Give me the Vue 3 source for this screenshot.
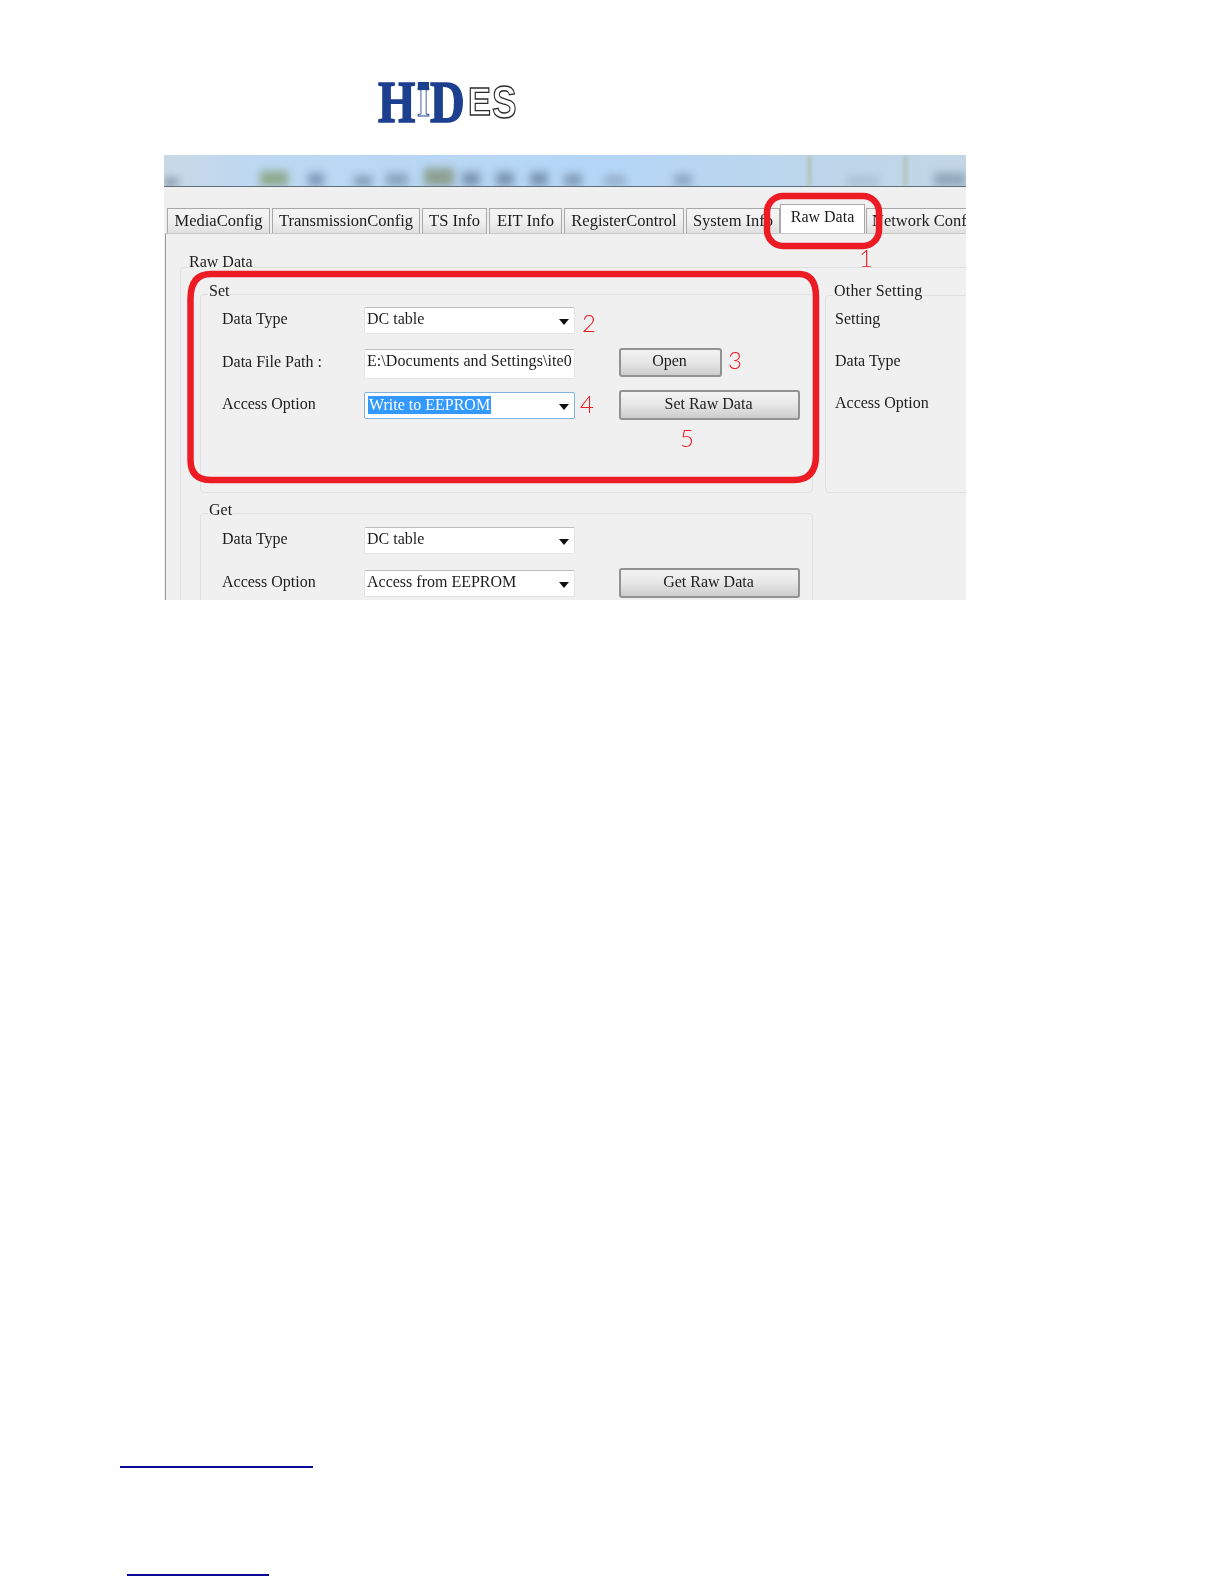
<script setup>
const blobs = [
  { x: 0, w: 14, c: '#6b7c8c', h: 8 },
  { x: 96, w: 28, c: '#7e9a6a', h: 15 },
  { x: 144, w: 16, c: '#6c83a8', h: 13 },
  { x: 190, w: 18, c: '#6d87a0', h: 10 },
  { x: 222, w: 22, c: '#7993ad', h: 13 },
  { x: 260, w: 30, c: '#7f8e70', h: 18 },
  { x: 298, w: 18, c: '#64819d', h: 14 },
  { x: 332, w: 18, c: '#64819d', h: 14 },
  { x: 366, w: 18, c: '#64819d', h: 14 },
  { x: 400, w: 18, c: '#6d87a0', h: 12 },
  { x: 440, w: 22, c: '#8aa4bd', h: 11 },
  { x: 510, w: 18, c: '#7b98b8', h: 12 },
  { x: 683, w: 32, c: '#a5bbcc', h: 10 },
  { x: 770, w: 32, c: '#7e94a8', h: 13 }
]
const seps = [643, 739]
const tabs = [
  { t: 'MediaConfig', w: 103 },
  { t: 'TransmissionConfig', w: 148 },
  { t: 'TS Info', w: 65 },
  { t: 'EIT Info', w: 73 },
  { t: 'RegisterControl', w: 120 },
  { t: 'System Info', w: 94 }
]
const numbers = [
  { n: '1', x: 695, y: 91 },
  { n: '2', x: 418, y: 156 },
  { n: '3', x: 564, y: 193 },
  { n: '4', x: 416, y: 237 },
  { n: '5', x: 516, y: 271 }
]
</script>

<template>
  <div class="page">
    <div class="logo" aria-label="HiDES">
      <span class="l-h">H</span><span class="l-i">I</span><span class="l-d">D</span><span class="l-e">E</span><span class="l-s">S</span>
    </div>

    <div class="shot">
      <div class="toolbar">
        <i v-for="b in blobs" :key="b.x" class="blob"
           :style="{ left: b.x + 'px', width: b.w + 'px', height: b.h + 'px', background: b.c }"></i>
        <i v-for="s in seps" :key="s" class="sep" :style="{ left: s + 'px' }"></i>
      </div>

      <div class="tabs">
        <div v-for="t in tabs" :key="t.t" class="tab" :style="{ width: t.w + 'px' }">{{ t.t }}</div>
        <div class="tab active">Raw Data</div>
        <div class="tab last">Network Config</div>
      </div>

      <div class="panel">
        <div class="raw">
          <span class="legend raw-legend">Raw Data</span>
          <div class="left">
            <div class="box set">
              <span class="legend">Set</span>
              <div class="row r1">
                <span class="lab">Data Type</span>
                <div class="combo"><span>DC table</span><i class="arrow"></i></div>
              </div>
              <div class="row r2">
                <span class="lab">Data File Path :</span>
                <div class="combo path"><span>E:\Documents and Settings\ite0</span></div>
                <button class="btn open">Open</button>
              </div>
              <div class="row r3">
                <span class="lab">Access Option</span>
                <div class="combo focus"><span class="sel">Write to EEPROM</span><i class="arrow"></i></div>
                <button class="btn wide">Set Raw Data</button>
              </div>
            </div>
            <div class="box get">
              <span class="legend">Get</span>
              <div class="row r1">
                <span class="lab">Data Type</span>
                <div class="combo"><span>DC table</span><i class="arrow"></i></div>
              </div>
              <div class="row r4">
                <span class="lab">Access Option</span>
                <div class="combo"><span>Access from EEPROM</span><i class="arrow"></i></div>
                <button class="btn wide">Get Raw Data</button>
              </div>
            </div>
          </div>
          <div class="box other">
            <span class="legend other-legend">Other Setting</span>
            <div class="o-lab o1">Setting</div>
            <div class="o-lab o2">Data Type</div>
            <div class="o-lab o3">Access Option</div>
          </div>
        </div>
      </div>

      <svg class="marks" width="802" height="445" viewBox="0 0 802 445" fill="none" stroke="#ed1c24" stroke-width="6.5">
        <path d="M47 119 H635 Q652 119 652 142 V300 Q652 325 630 325 H47 Q26.500 325 26.500 305 V144 Q26.500 119 47 119 Z" />
        <rect x="603" y="41" width="112" height="50" rx="16" />
      </svg>
      <span v-for="m in numbers" :key="m.n" class="num" :style="{ left: m.x + 'px', top: m.y + 'px' }">{{ m.n }}</span>
    </div>

    <div class="link l1"></div>
    <div class="link l2"></div>
  </div>
</template>

<style>
body { margin: 0; background: #fff; }
</style>

<style scoped>
.page {
  width: 1224px;
  height: 1584px;
  background: #fff;
  overflow: hidden;
  font-family: "Liberation Serif", serif;
  color: #1c1c1c;
}
.logo {
  height: 46px;
  margin: 79px 0 0 378px;
  display: flex;
  align-items: flex-end;
  font-family: "Liberation Serif", serif;
  font-weight: 700;
  line-height: 46px;
  color: #1c3f8f;
}
.logo span { display: inline-block; position: relative; transform-origin: left bottom; }
.l-h { font-size: 60px; width: 39px; transform: scaleX(.8); -webkit-text-stroke: 1.5px #1c3f8f; }
.l-i { font-size: 42px; width: 13px; color: #fff; -webkit-text-stroke: 1px #1c3f8f; transform: scaleX(.8); }
.l-i::before {
  content: "";
  position: absolute;
  left: 1px;
  top: 3px;
  width: 14px;
  height: 8px;
  background: #1c3f8f;
}
.l-d { font-size: 60px; width: 38px; transform: scaleX(.8); -webkit-text-stroke: 1.5px #1c3f8f; }
.l-e, .l-s {
  font-family: "Liberation Sans", sans-serif;
  color: #fff;
  -webkit-text-stroke: 1.3px #2a2a2a;
}
.l-e { font-size: 39px; width: 24px; transform: scaleX(.88); }
.l-s { font-size: 46px; width: 24px; transform: scaleX(.8); }

.shot {
  position: relative;
  width: 802px;
  height: 445px;
  margin: 30px 0 0 164px;
  overflow: hidden;
  background: #f0f0f0;
  font-size: 16.500px;
  filter: blur(.3px);
}
.toolbar {
  position: relative;
  height: 31px;
  overflow: hidden;
  border-bottom: 1px solid #5f6f7c;
  background: linear-gradient(90deg, #c9d9e6 0, #bcd8f2 12%, #b4d6f7 55%, #bcd6ec 78%, #c2d6e6 100%);
}
.blob {
  position: absolute;
  bottom: 0;
  opacity: .75;
  filter: blur(4px);
}
.sep {
  position: absolute;
  top: 0;
  bottom: 0;
  width: 5px;
  background: #b4c8c4;
  filter: blur(1.500px);
}
.tabs {
  display: flex;
  align-items: flex-end;
  gap: 2px;
  height: 46px;
  padding-left: 3px;
}
.tab {
  flex: none;
  box-sizing: border-box;
  height: 25px;
  line-height: 24px;
  text-align: center;
  white-space: nowrap;
  border: 1px solid #a8a8a8;
  border-bottom: 0;
  background: linear-gradient(#f4f4f4, #f0f0f0 50%, #e0e0e0);
}
.tab.active {
  width: 85px;
  height: 29px;
  line-height: 24px;
  margin-left: -2px;
  font-size: 16px;
  background: #fff;
}
.tab.last {
  width: 110px;
  margin-left: -1px;
  padding-left: 5px;
  text-align: left;
}
.panel {
  margin-left: 1px;
  height: 367px;
  box-sizing: border-box;
  padding: 33px 0 0 14px;
  border-left: 1px solid #9a9a9a;
  border-top: 1px solid #c8c8c8;
  background: #f0f0f0;
}
.raw {
  position: relative;
  display: flex;
  gap: 12px;
  height: 340px;
  padding: 26px 0 0 19px;
  font-size: 16px;
  border: 1px solid #e0e0e0;
  border-right: 0;
  border-radius: 4px 0 0 0;
}
.left { flex: none; width: 613px; }
.box {
  position: relative;
  box-sizing: border-box;
  border: 1px solid #e0e0e0;
  border-radius: 4px;
}
.legend {
  position: absolute;
  left: 7px;
  top: -14px;
  padding: 0 1px;
  line-height: 20px;
  background: #f0f0f0;
  white-space: nowrap;
}
.raw-legend { left: 7px; top: -16px; }
.other-legend { top: -15px; letter-spacing: .2px; }
.set { height: 199px; padding-top: 12px; }
.get { height: 100px; margin-top: 20px; padding-top: 13px; }
.other { flex: none; width: 160px; height: 198px; margin-top: 1px; padding-left: 9px; }
.row {
  display: flex;
  align-items: center;
  padding-left: 21px;
}
.r1 { height: 27px; }
.r2 { height: 30px; margin-top: 15px; }
.r3 { height: 30px; margin-top: 11px; }
.r4 { height: 30px; margin-top: 14px; }
.lab { flex: none; width: 142px; padding-bottom: 3px; white-space: nowrap; }
.r2 .lab { padding-bottom: 4px; }
.combo {
  position: relative;
  flex: none;
  box-sizing: border-box;
  width: 211px;
  height: 27px;
  padding: 0 2px 3px;
  line-height: 24px;
  display: flex;
  align-items: center;
  background: #fff;
  border: 1px solid #e4e4e4;
  border-top-color: #bdbdbd;
  border-radius: 2px;
  white-space: nowrap;
  overflow: hidden;
}
.combo.path { height: 30px; letter-spacing: .07px; padding-bottom: 6px; }
.combo.focus { border-color: #7fb4e2; padding: 0 3px; }
.sel {
  background: #3399ff;
  color: #fff;
  padding: 0 1px;
  height: 18px;
  line-height: 17px;
}
.arrow {
  position: absolute;
  right: 5px;
  top: 11px;
  border: 5px solid transparent;
  border-top: 6px solid #111;
  border-bottom: 0;
}
.btn {
  flex: none;
  box-sizing: border-box;
  height: 30px;
  margin-left: 44px;
  padding: 0 2px 3px 0;
  font: inherit;
  color: inherit;
  border: 2px solid #929292;
  border-radius: 3px;
  background: linear-gradient(#f3f3f3, #e6e6e6 50%, #cdcdcd);
}
.btn.open { width: 103px; height: 29px; margin-bottom: 3px; }
.btn.wide { width: 181px; }
.o-lab { white-space: nowrap; line-height: 20px; }
.o1 { margin-top: 13px; }
.o2 { margin-top: 22px; }
.o3 { margin-top: 22px; }

.marks { position: absolute; left: 0; top: 0; pointer-events: none; }
.num {
  position: absolute;
  font-family: Lato, sans-serif;
  font-weight: 300;
  font-size: 24px;
  line-height: 24px;
  color: #ed1c24;
}
.link { border-top: 2px solid #0a0a96; }
.l1 { width: 193px; margin: 866px 0 0 120px; }
.l2 { width: 142px; margin: 106px 0 0 127px; }
</style>
